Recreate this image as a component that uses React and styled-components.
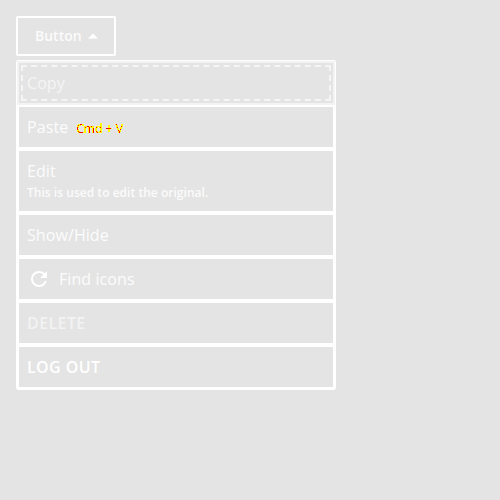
import React from "react";
import styled, { createGlobalStyle } from "styled-components";

const Global = createGlobalStyle`
  html { background: #e4e4e4; }
  body { margin: 0; font-family: "Open Sans", "Noto Sans", sans-serif; color: #fff; }
  * { box-sizing: border-box; }
`;

const Page = styled.main`
  padding: 16px;
`;

const Trigger = styled.button`
  display: flex;
  align-items: center;
  width: 100px;
  height: 40px;
  margin: 0 0 4px;
  padding: 0 0 0 17px;
  border: 2px solid #fff;
  border-radius: 2px;
  background: transparent;
  color: #fbfbfb;
  font: 600 14px/20px "Open Sans", sans-serif;
`;

const Caret = styled.svg`
  width: 10px;
  height: 6px;
  margin-left: 6px;
`;

const Menu = styled.ul`
  width: 320px;
  margin: 0;
  padding: 0;
  list-style: none;
  border: 1px solid #fff;
  border-radius: 2px;
`;

const Item = styled.li`
  display: flex;
  align-items: ${(p) => (p.$tall ? "flex-start" : "center")};
  flex-direction: ${(p) => (p.$tall ? "column" : "row")};
  height: ${(p) => (p.$tall ? 64 : 44)}px;
  padding: ${(p) => (p.$tall ? "8px" : "0 8px")};
  border: 2px solid ${(p) => (p.$focused ? "#f3f3f3" : "#fff")};
  outline: ${(p) => (p.$focused ? "2px dashed #f5f5f5" : "none")};
  outline-offset: -6px;
  color: ${(p) => p.$color || "#fcfcfc"};
  font-size: 16px;
  line-height: 24px;
  font-weight: ${(p) => p.$weight || 400};
  letter-spacing: ${(p) => p.$spacing || "0.08px"};
`;

const Shortcut = styled.span`
  margin-left: 8px;
  padding-top: 3px;
  font-size: 12px;
  line-height: 16px;
  letter-spacing: 0.05px;
  color: #f00;
  filter: url(#two-tone);
`;

const Filters = styled.svg`
  position: absolute;
  width: 0;
  height: 0;
`;

const Description = styled.span`
  margin-top: 2px;
  font-size: 12px;
  line-height: 16px;
  font-weight: 600;
  letter-spacing: 0.03px;
  color: #fbfbfb;
`;

const Icon = styled.svg`
  width: 24px;
  height: 24px;
  margin-right: 8px;
  fill: #fff;
`;

export default function App() {
  return (
    <Page>
      <Global />
      <Filters aria-hidden="true">
        <filter id="two-tone" colorInterpolationFilters="sRGB">
          <feColorMatrix values="0 0 0 0 1  0 0 0 1 0  0 0 0 0 0  0 0 0 1 0" />
          <feComponentTransfer>
            <feFuncG type="discrete" tableValues="1 1 1 1 1 1 1 1 1 1 1 1 1 0 0 0" />
            <feFuncA type="discrete" tableValues="0 1 1 1 1 1 1 1 1 1 1 1 1 1 1 1" />
          </feComponentTransfer>
        </filter>
      </Filters>
      <Trigger>
        Button
        <Caret viewBox="0 0 10 6"><path d="M0 5.5 5 .5l5 5z" fill="#fff" /></Caret>
      </Trigger>
      <Menu>
        <Item $focused $color="#f5f5f5">Copy</Item>
        <Item>Paste<Shortcut>Cmd + V</Shortcut></Item>
        <Item $tall>
          Edit
          <Description>This is used to edit the original.</Description>
        </Item>
        <Item>Show/Hide</Item>
        <Item>
          <Icon viewBox="0 0 24 24">
            <path d="M17.65 6.35A7.96 7.96 0 0 0 12 4a8 8 0 1 0 7.73 10h-2.08A6 6 0 1 1 12 6c1.66 0 3.14.69 4.22 1.78L13 11h7V4z" />
          </Icon>
          Find icons
        </Item>
        <Item $color="#f3f3f3" $weight={600} $spacing="0.4px">DELETE</Item>
        <Item $color="#fff" $weight={600} $spacing="0.4px">LOG OUT</Item>
      </Menu>
    </Page>
  );
}
